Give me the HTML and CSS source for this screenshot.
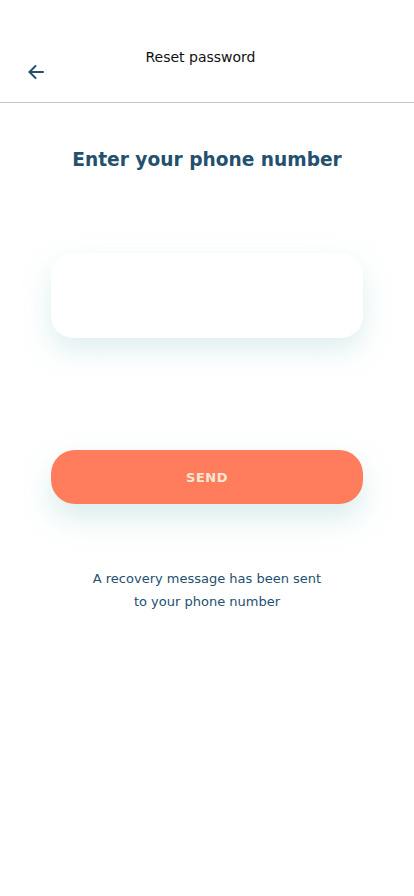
FILE: index.html
```html
<!DOCTYPE html>
<html>
<head>
<meta charset="utf-8">
<link rel="stylesheet" href="styles.css">
</head>
<body>
<div class="screen">
  <header class="topbar">
    <button class="back" aria-label="Back">
      <svg width="18" height="16" viewBox="0 0 18 16" fill="none" stroke="#24506f" stroke-width="2" stroke-linecap="round" stroke-linejoin="round">
        <path d="M16 8H2.5"/>
        <path d="M8.5 2L2.5 8l6 6"/>
      </svg>
    </button>
    <h1 class="topbar-title">Reset password</h1>
  </header>
  <main class="content">
    <h2 class="heading">Enter your phone number</h2>
    <div class="field"></div>
    <button class="send">SEND</button>
    <p class="note">A recovery message has been sent<br>to your phone number</p>
  </main>
</div>
</body>
</html>
```
FILE: styles.css
```css
* { box-sizing: border-box; }
html, body { margin: 0; padding: 0; background: #fff; }
body { font-family: "DejaVu Sans", "Open Sans", sans-serif; }
.screen { width: 414px; height: 896px; overflow: hidden; }
.topbar {
  height: 103px;
  border-bottom: 1px solid #c4c4c4;
  display: grid;
  grid-template-columns: 1fr;
  position: relative;
}
.topbar-title {
  margin: 0;
  padding: 48px 13px 0 0;
  text-align: center;
  font-size: 14px;
  font-weight: 500;
  color: #111;
  line-height: 18px;
}
.back {
  position: absolute;
  left: 27px;
  top: 64px;
  background: none;
  border: 0;
  padding: 0;
  width: 18px;
  height: 16px;
  display: flex;
}
.content {
  display: flex;
  flex-direction: column;
  align-items: center;
}
.heading {
  margin: 45px 0 0;
  font-size: 18.6px;
  font-weight: 700;
  color: #24506f;
  line-height: 24px;
}
.field {
  margin-top: 81px;
  width: 312px;
  height: 85px;
  border-radius: 22px;
  background: #fff;
  box-shadow: 0 12px 28px rgba(160, 205, 210, 0.35);
}
.send {
  margin-top: 112px;
  width: 312px;
  height: 54px;
  border: 0;
  border-radius: 24px;
  background: #ff7d5c;
  color: #f6e7d6;
  font-family: inherit;
  font-size: 13px;
  font-weight: 700;
  letter-spacing: 0.5px;
  box-shadow: 0 14px 30px rgba(150, 200, 200, 0.35);
}
.note {
  margin: 63px 0 0;
  text-align: center;
  font-size: 13px;
  line-height: 23px;
  color: #24506f;
}
```
